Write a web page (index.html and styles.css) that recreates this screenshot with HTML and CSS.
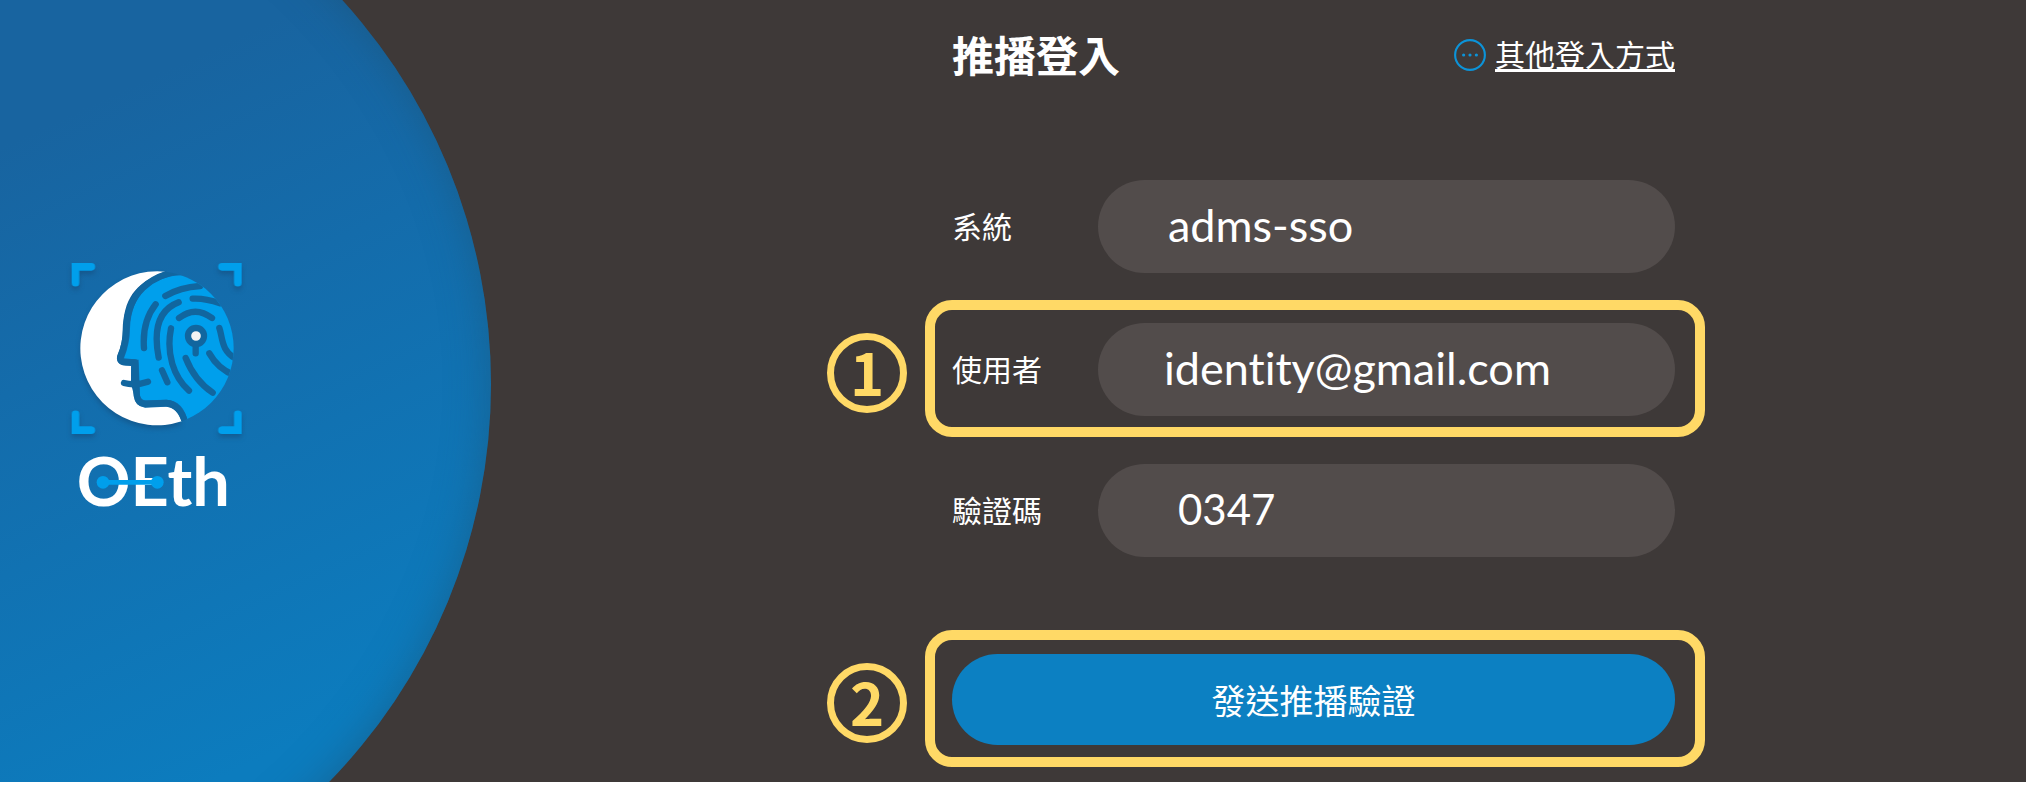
FILE: index.html
```html
<!DOCTYPE html>
<html lang="zh-Hant">
<head>
<meta charset="utf-8">
<meta name="viewport" content="width=device-width, initial-scale=1">
<title>推播登入</title>
<link rel="stylesheet" href="styles.css">
</head>
<body>
<main class="page">
  <section class="brand">
    <svg class="logo" viewBox="60 60 522 750" role="img" aria-label="OEth">
      <defs>
        <clipPath id="disc"><circle cx="320" cy="325" r="231"/></clipPath>
        <path id="corner" d="M65 69H124a11 11 0 0 1 0 23H88V128a11 11 0 0 1-23 0z"/>
      </defs>
      <g class="logo-blue logo-shadow">
        <use href="#corner"/>
        <use href="#corner" transform="matrix(-1 0 0 1 640 0)"/>
        <use href="#corner" transform="matrix(1 0 0 -1 0 651)"/>
        <use href="#corner" transform="matrix(-1 0 0 -1 640 651)"/>
      </g>
      <path class="logo-white logo-shadow" d="M345 95A231 231 0 1 0 395 544Q382 502 348 500L285 503Q254 500 252 465L243 432V378L218 376Q196 370 202 346Q218 312 218 270C222 180 250 130 345 95z"/>
      <g clip-path="url(#disc)">
        <path class="logo-blue" d="M414 545Q400 482 350 479L290 481Q272 482 270 466L266 359L222 355Q240 310 240 265C244 160 310 105 405 106L570 90V560z"/>
        <g class="logo-line">
          <path class="logo-outline" d="M395 92C300 105 234 160 229 262Q228 310 211 352Q210 367 228 367H255L260 466Q264 492 286 492L348 489Q390 492 406 550"/>
          <path d="M222 429Q256 438 294 425M346 168Q390 142 450 138M428 176Q465 174 510 190M317 193Q276 245 282 324M386 187C330 208 308 260 326 353M363 265C348 340 370 410 417 452M387 234Q436 196 486 234M336 391L352 427M407 354Q434 422 488 458M478 340Q506 390 560 408M508 264C518 290 512 336 562 358M437 318V340"/>
        </g>
        <circle class="logo-eye" cx="438" cy="288" r="24"/>
      </g>
      <text class="logo-name" x="80" y="799">OEth</text>
      <path class="logo-link" d="M159 727H322"/>
      <circle class="logo-blue" cx="159" cy="727" r="19"/>
      <circle class="logo-blue" cx="322" cy="727" r="19"/>
    </svg>
  </section>

  <form class="login">
    <header class="heading">
      <h1 class="title">推播登入</h1>
      <a class="other" href="#">
        <svg class="other-icon" viewBox="0 0 32 32" aria-hidden="true">
          <circle cx="16" cy="16" r="14"/>
          <path d="M10 16h0M16 16h0M22 16h0"/>
        </svg>
        <span class="other-text">其他登入方式</span>
      </a>
    </header>

    <div class="row">
      <div class="field">
        <label class="label" for="system">系統</label>
        <input class="input" id="system" type="text" value="adms-sso">
      </div>
    </div>

    <div class="row">
      <span class="step">1</span>
      <div class="field marked">
        <label class="label" for="user">使用者</label>
        <input class="input input-user" id="user" type="text" value="identity@gmail.com">
      </div>
    </div>

    <div class="row">
      <div class="field">
        <label class="label" for="code">驗證碼</label>
        <input class="input input-code" id="code" type="text" value="0347">
      </div>
    </div>

    <div class="row row-submit">
      <span class="step">2</span>
      <div class="field marked">
        <button class="submit" type="button">發送推播驗證</button>
      </div>
    </div>
  </form>
</main>
</body>
</html>
```

FILE: styles.css
```css
* {
  box-sizing: border-box;
}

body {
  margin: 0;
  background: #fff;
  color: #fff;
  font-family: "Noto Sans CJK TC", sans-serif;
}

.page {
  position: relative;
  display: grid;
  grid-template-columns: 827fr 878fr 321fr;
  overflow: hidden;
  background: #3e3938;
}

.brand {
  display: flex;
  align-items: center;
  padding: 0 0 12px 70px;
}

.brand::before {
  content: "";
  position: absolute;
  top: -186px;
  left: -649px;
  width: 1140px;
  height: 1140px;
  border-radius: 50%;
  background: linear-gradient(155deg, #1864a0 38%, #146cab 53%, #0c7cbe 82%);
  box-shadow: inset 0 0 40px rgba(30, 80, 110, 0.5);
}

.logo {
  position: relative;
  width: 174px;
  height: 250px;
  overflow: visible;
}

.logo-blue {
  fill: #009fec;
}

.logo-white {
  fill: #fff;
}

.logo-shadow {
  filter: drop-shadow(0 10px 8px rgba(20, 60, 100, 0.4));
}

.logo-line {
  fill: none;
  stroke: #11669f;
  stroke-width: 19;
  stroke-linecap: round;
  stroke-linejoin: round;
}

.logo-eye {
  fill: #f2f2f2;
  stroke: #11669f;
  stroke-width: 19;
}

.logo-name {
  fill: #fff;
  font: 700 200px Lato, sans-serif;
}

.logo-link {
  stroke: #009fec;
  stroke-width: 14;
}

.login {
  display: flex;
  flex-direction: column;
  gap: 27px;
  padding: 25px 0 15px;
}

.heading {
  display: flex;
  align-items: center;
  justify-content: space-between;
  height: 60px;
  margin: 0 30px 68px 125px;
}

.title {
  margin: 0;
  padding-bottom: 2px;
  font-size: 42px;
  line-height: 58px;
}

.other {
  display: flex;
  align-items: center;
  gap: 8px;
  color: #fff;
  font-size: 30px;
  line-height: 44px;
  text-decoration: none;
}

.other-icon {
  width: 34px;
  height: 34px;
  fill: none;
  stroke: #0c93d8;
  stroke-width: 2;
}

.other-icon path {
  stroke-width: 3;
  stroke-linecap: round;
}

.other-text {
  padding-bottom: 4px;
  text-decoration: underline;
  text-decoration-thickness: 3px;
  text-underline-offset: 3px;
  text-decoration-skip-ink: none;
}

.row {
  display: grid;
  grid-template-columns: 80px 1fr;
  column-gap: 18px;
}

.row-submit {
  margin-top: 46px;
}

.step {
  display: flex;
  align-items: center;
  justify-content: center;
  width: 80px;
  height: 80px;
  margin-top: 33px;
  padding-bottom: 4px;
  border: 7px solid #ffd966;
  border-radius: 50%;
  color: #ffd966;
  font-size: 58px;
  font-weight: 700;
  line-height: 60px;
}

.field {
  display: grid;
  grid-template-columns: 146px 1fr;
  grid-column: 2;
  align-items: center;
  padding: 0 30px 0 27px;
}

.marked {
  padding: 13px 20px 11px 17px;
  border: 10px solid #ffd966;
  border-radius: 27px;
}

.label {
  padding-bottom: 4px;
  font-size: 30px;
  line-height: 44px;
}

.input {
  width: 100%;
  height: 93px;
  padding: 0 66px 3px 70px;
  border: 0;
  border-radius: 47px;
  background: #524c4b;
  color: #fff;
  font-family: Lato, sans-serif;
  font-size: 45px;
  font-variant-ligatures: none;
}

.input-user {
  padding-left: 66px;
}

.input-code {
  padding-left: 80px;
  font-size: 42px;
}

.submit {
  grid-column: 1 / -1;
  height: 91px;
  margin-top: 1px;
  margin-bottom: 1px;
  border: 0;
  border-radius: 46px;
  background: #0c80c2;
  color: #fff;
  font-family: inherit;
  font-size: 34px;
}
```
